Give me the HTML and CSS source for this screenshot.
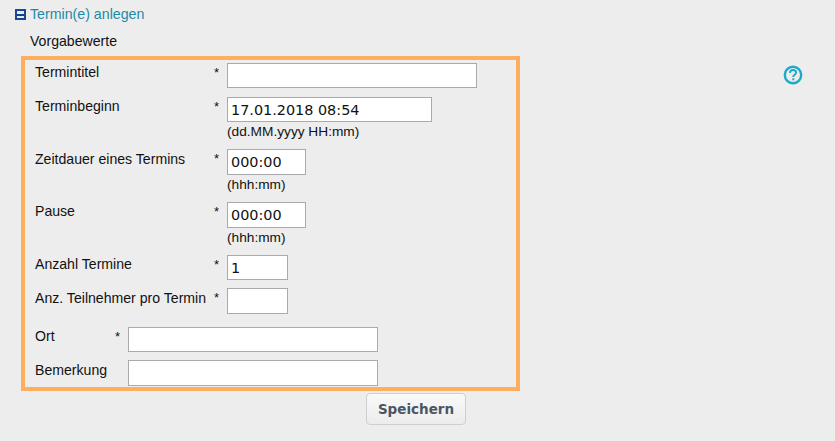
FILE: index.html
```html
<!DOCTYPE html>
<html lang="de">
<head>
<meta charset="utf-8">
<title>Termin(e) anlegen</title>
<link rel="stylesheet" href="styles.css">
</head>
<body>
<div class="page">
  <div class="heading">
    <span class="toggle"><span class="minus"></span></span>
    <a class="heading-link">Termin(e) anlegen</a>
  </div>
  <div class="defaults">Vorgabewerte</div>
  <div class="main">
    <form class="box">
      <div class="row row-title">
        <span class="label">Termintitel</span><span class="star">*</span>
        <div class="field"><input class="input w-250" type="text"></div>
      </div>
      <div class="row row-start">
        <span class="label">Terminbeginn</span><span class="star">*</span>
        <div class="field"><input class="input w-205" type="text" value="17.01.2018 08:54"><span class="hint">(dd.MM.yyyy HH:mm)</span></div>
      </div>
      <div class="row row-duration">
        <span class="label low">Zeitdauer eines Termins</span><span class="star">*</span>
        <div class="field"><input class="input w-79 tall" type="text" value="000:00"><span class="hint">(hhh:mm)</span></div>
      </div>
      <div class="row row-pause">
        <span class="label">Pause</span><span class="star">*</span>
        <div class="field"><input class="input w-79 tall" type="text" value="000:00"><span class="hint">(hhh:mm)</span></div>
      </div>
      <div class="row row-count">
        <span class="label">Anzahl Termine</span><span class="star">*</span>
        <div class="field"><input class="input w-61" type="text" value="1"></div>
      </div>
      <div class="row row-people">
        <span class="label low">Anz. Teilnehmer pro Termin</span><span class="star">*</span>
        <div class="field"><input class="input w-61 tall" type="text"></div>
      </div>
      <div class="row narrow row-place">
        <span class="label">Ort</span><span class="star">*</span>
        <div class="field"><input class="input w-250" type="text"></div>
      </div>
      <div class="row narrow">
        <span class="label low">Bemerkung</span><span class="star"></span>
        <div class="field"><input class="input w-250 tall" type="text"></div>
      </div>
    </form>
    <div class="help" aria-label="Hilfe">
      <svg width="20" height="20" viewBox="0 0 20 20">
        <circle cx="10" cy="10" r="8.200" fill="none" stroke="#1fa9c9" stroke-width="2.400"/>
        <path d="M7 8c0-2 1.400-3 3.100-3 1.800 0 3 1.100 3 2.600 0 2.200-2.800 2.300-2.800 4.300" fill="none" stroke="#1fa9c9" stroke-width="1.900"/>
        <rect x="9.300" y="13.300" width="2" height="2" fill="#1fa9c9"/>
      </svg>
    </div>
  </div>
  <div class="actions"><button class="save" type="button">Speichern</button></div>
</div>
</body>
</html>
```
FILE: styles.css
```css
html, body {
  margin: 0;
  padding: 0;
  height: 100%;
  background: #ededed;
}
body {
  font-family: "Liberation Sans", Arial, sans-serif;
  font-size: 14.1px;
  color: #111;
  overflow: hidden;
}
.page {
  padding: 6px 0 0 15px;
}
.heading {
  display: flex;
  align-items: flex-start;
  height: 17px;
  gap: 5px;
}
.toggle {
  display: flex;
  align-items: center;
  justify-content: center;
  width: 11px;
  height: 11px;
  border: 2px solid #1746a0;
  background: #e6ebf2;
  box-sizing: border-box;
  margin-top: 3px;
}
.minus {
  width: 7px;
  height: 2px;
  flex: none;
  background: #1a3f80;
}
.heading-link {
  color: #1c8aa8;
  font-size: 14.2px;
  line-height: 16px;
  margin-left: -1px;
}
.defaults {
  margin: 10px 0 0 15px;
  height: 16px;
  line-height: 16px;
}
.main {
  display: flex;
  margin: 7px 0 0 6px;
}
.box {
  box-sizing: border-box;
  width: 499px;
  height: 335px;
  border: 4px solid #ffae5f;
  padding: 3px 0 0 10px;
}
.row {
  display: grid;
  grid-template-columns: 179px 13px 1fr;
}
.row.narrow {
  grid-template-columns: 80px 13px 1fr;
}
.label {
  padding-top: 2px;
  line-height: 15px;
}
.label.low {
  padding-top: 3px;
}
.star {
  line-height: 15px;
  padding-top: 2px;
  font-size: 13px;
}
.field {
  display: flex;
  flex-direction: column;
  align-items: flex-start;
}
.input {
  box-sizing: border-box;
  height: 25px;
  border: 1px solid #aaaaaa;
  background: #fff;
  padding: 0 3px;
  margin: 0;
  font-family: "DejaVu Sans", Verdana, sans-serif;
  font-size: 14.4px;
  color: #111;
  outline: none;
}
.input.tall { height: 26px; }
.w-250 { width: 250px; }
.w-205 { width: 205px; }
.w-79 { width: 79px; }
.w-61 { width: 61px; }
.hint {
  line-height: 15px;
  margin-top: 2px;
  margin-bottom: 1px;
  font-size: 13.7px;
}
.row-title { margin-bottom: 9px; }
.row-start { margin-bottom: 9px; }
.row-duration { margin-bottom: 9px; }
.row-pause { margin-bottom: 9px; }
.row-count { margin-bottom: 8px; }
.row-people { margin-bottom: 13px; }
.row-place { margin-bottom: 8px; }
.help {
  margin: 9px 0 0 263px;
  height: 20px;
}
.actions {
  margin: 2px 0 0 351px;
}
.save {
  box-sizing: border-box;
  width: 100px;
  height: 32px;
  border: 1px solid #cfcfcf;
  border-radius: 4px;
  background: linear-gradient(#f9f9f9, #ececec);
  font-family: "DejaVu Sans", Verdana, sans-serif;
  font-weight: bold;
  font-size: 13.5px;
  color: #4c5663;
  padding: 0;
}
```
